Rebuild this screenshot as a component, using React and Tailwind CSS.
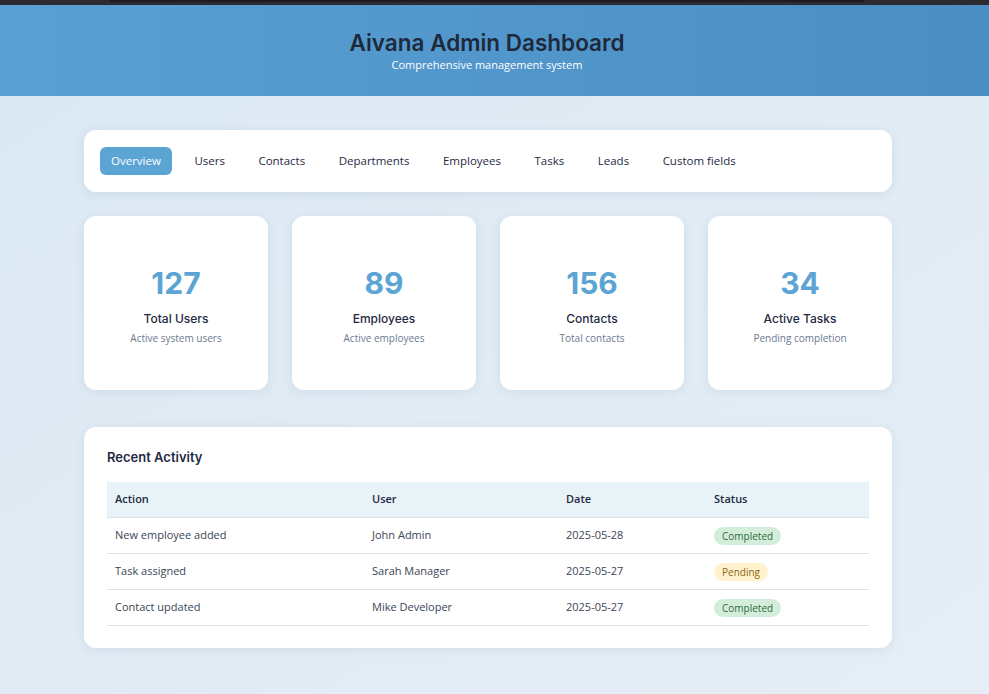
import React from 'react';

const tabs = ['Overview', 'Users', 'Contacts', 'Departments', 'Employees', 'Tasks', 'Leads', 'Custom fields'];

const stats = [
  { value: '127', label: 'Total Users', sub: 'Active system users' },
  { value: '89', label: 'Employees', sub: 'Active employees' },
  { value: '156', label: 'Contacts', sub: 'Total contacts' },
  { value: '34', label: 'Active Tasks', sub: 'Pending completion' },
];

const rows = [
  { action: 'New employee added', user: 'John Admin', date: '2025-05-28', status: 'Completed' },
  { action: 'Task assigned', user: 'Sarah Manager', date: '2025-05-27', status: 'Pending' },
  { action: 'Contact updated', user: 'Mike Developer', date: '2025-05-27', status: 'Completed' },
];

const body = { fontFamily: '"Open Sans", "Noto Sans", sans-serif' };
const head = { fontFamily: 'Inter, "Noto Sans", sans-serif' };

function Badge({ status }) {
  const done = status === 'Completed';
  return (
    <span
      className={
        'inline-block rounded-full px-[8px] py-[2px] text-[10px] leading-[14px] ' +
        (done ? 'bg-[#d4edda] text-[#2d6a3e]' : 'bg-[#fff3cd] text-[#8a6513]')
      }
    >
      {status}
    </span>
  );
}

export default function App() {
  return (
    <div className="min-h-[694px] w-[989px] bg-gradient-to-br from-[#dbe8f3] to-[#e6eef5]" style={body}>
      {/* top strip */}
      <div className="h-[5px] bg-[#2c2b31] flex justify-center">
        <div className="ml-[-16px] w-[756px] h-[2px] bg-[#1c1b20] rounded-b" />
      </div>

      <header className="h-[91px] bg-gradient-to-r from-[#5aa0d3] to-[#4a8ec3] flex flex-col items-center pt-[23px] pr-[15px]">
        <h1 className="text-[22.5px] leading-[30px] font-semibold text-[#1e293b]" style={head}>
          Aivana Admin Dashboard
        </h1>
        <p className="text-[11px] leading-[16px] text-white mt-[-1px]">Comprehensive management system</p>
      </header>

      <main className="ml-[84px] w-[808px] pt-[34px] pb-[46px]">
        <nav className="bg-white rounded-xl shadow-[0_2px_10px_rgba(80,120,160,0.12)] px-[16px] py-[17px] flex gap-[11.5px]">
          {tabs.map((t, i) => (
            <span
              key={t}
              className={
                'h-[28px] px-[11px] flex items-center rounded-md text-[11.5px] font-medium ' +
                (i === 0 ? 'bg-[#5ba4d4] text-white' : 'text-[#1f2a44]')
              }
            >
              {t}
            </span>
          ))}
        </nav>

        <div className="grid grid-cols-4 gap-[24px] mt-[24px]">
          {stats.map((s) => (
            <div
              key={s.label}
              className="bg-white rounded-xl shadow-[0_2px_10px_rgba(80,120,160,0.12)] h-[174px] flex flex-col items-center pt-[48px]"
            >
              <div className="text-[30px] leading-[38px] font-bold text-[#5ba4d4]" style={head}>
                {s.value}
              </div>
              <div className="text-[12px] leading-[16px] font-medium text-[#1f2a44] mt-[9px]" style={head}>
                {s.label}
              </div>
              <div className="text-[10px] leading-[14px] text-[#6b7a90] mt-[4px]">{s.sub}</div>
            </div>
          ))}
        </div>

        <section className="bg-white rounded-xl shadow-[0_2px_10px_rgba(80,120,160,0.12)] mt-[37px] px-[23px] pt-[21px] pb-[22px]">
          <h2 className="text-[13px] leading-[18px] font-semibold text-[#1f2a44]" style={head}>
            Recent Activity
          </h2>
          <table className="w-full mt-[16px] text-[11px] border-collapse">
            <thead>
              <tr className="bg-[#e8f3f8] h-[35px] border-b border-[#dde3ea]">
                <th className="w-[257px] text-left pl-[8px] font-semibold text-[#1f2a44]">Action</th>
                <th className="w-[194px] text-left pl-[8px] font-semibold text-[#1f2a44]">User</th>
                <th className="w-[148px] text-left pl-[8px] font-semibold text-[#1f2a44]">Date</th>
                <th className="text-left pl-[8px] font-semibold text-[#1f2a44]">Status</th>
              </tr>
            </thead>
            <tbody className="text-[#3b4556]">
              {rows.map((r, i) => (
                <tr key={i} className="h-[36px] border-b border-[#dde3ea]">
                  <td className="pl-[8px] pt-[1px]">{r.action}</td>
                  <td className="pl-[8px] pt-[1px]">{r.user}</td>
                  <td className="pl-[8px] pt-[1px]">{r.date}</td>
                  <td className="pl-[8px] pt-[1px]">
                    <Badge status={r.status} />
                  </td>
                </tr>
              ))}
            </tbody>
          </table>
        </section>
      </main>
    </div>
  );
}
